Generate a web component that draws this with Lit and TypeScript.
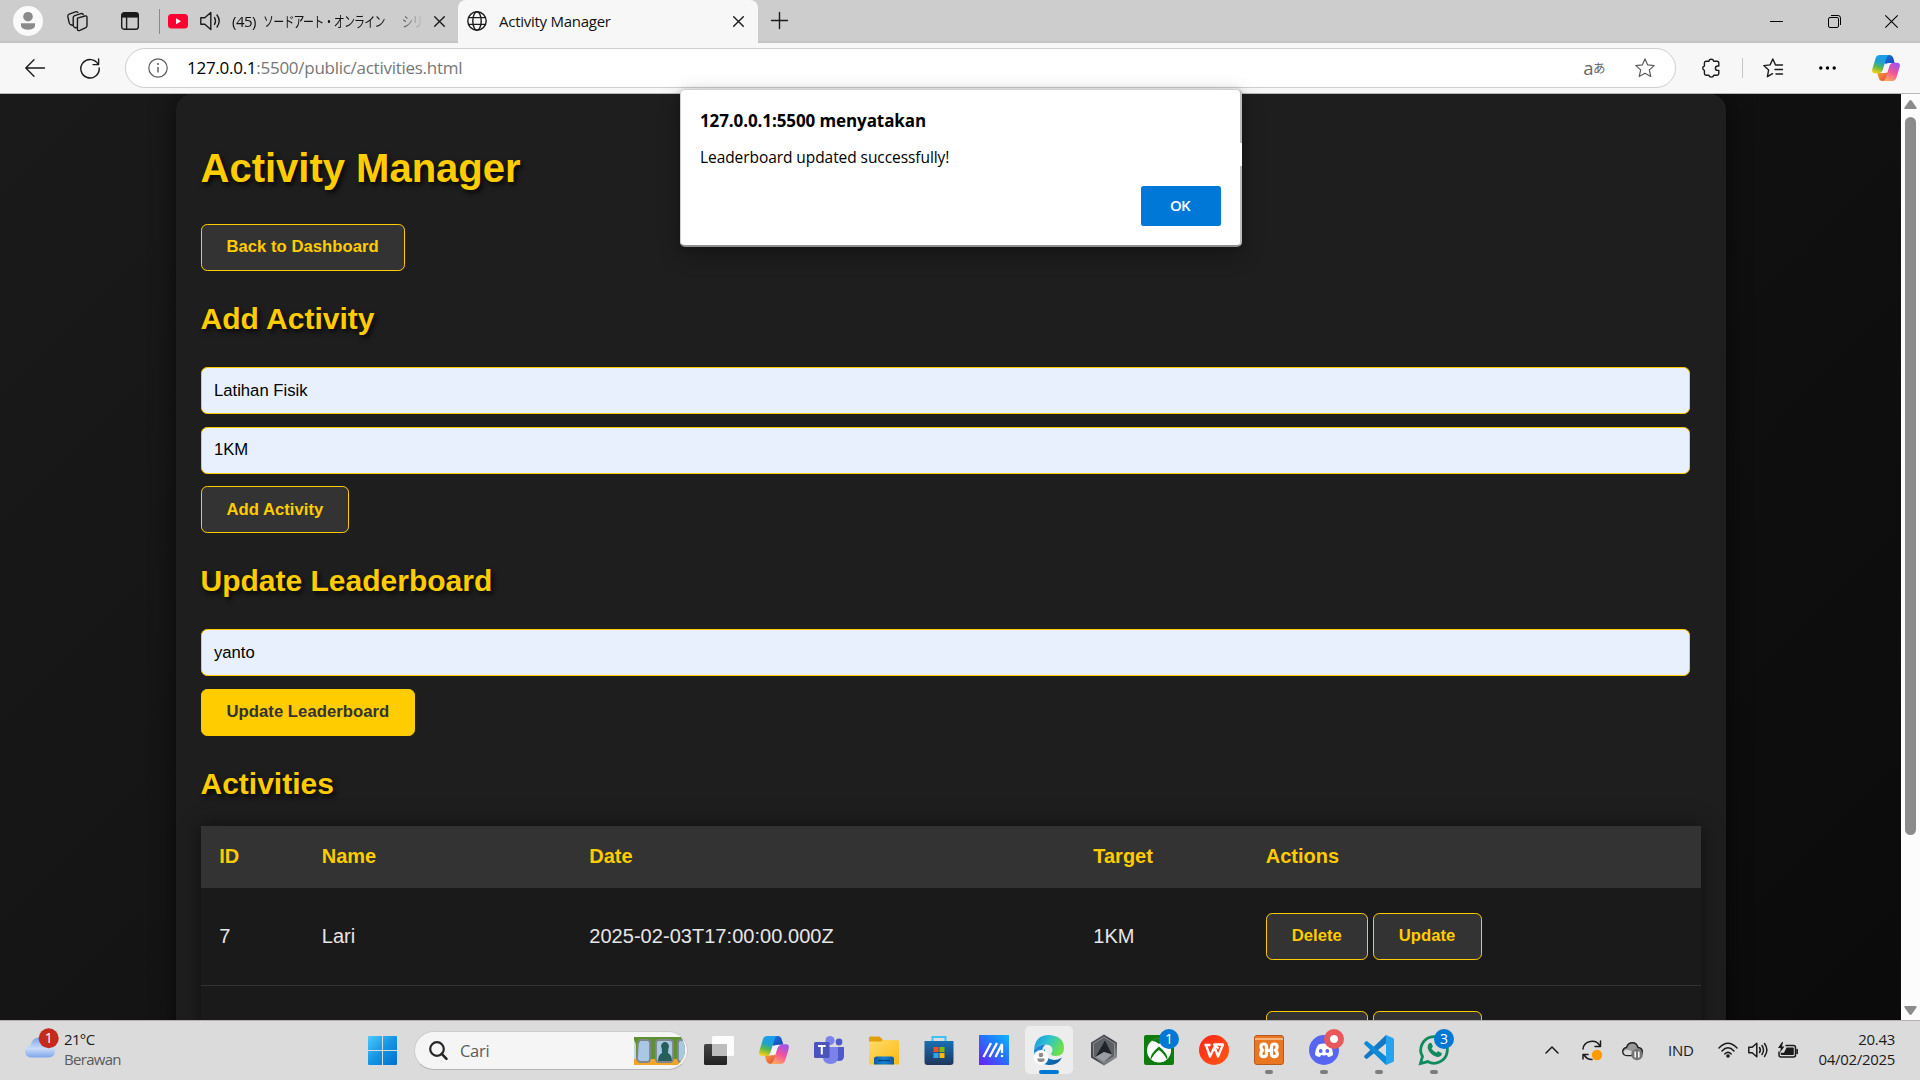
import { LitElement, html, css, svg } from "lit";
import { customElement } from "lit/decorators.js";

const UI_FONT = css`"Open Sans", "Noto Sans CJK JP", sans-serif`;

const copilotIcon = () => html`
  <svg class="copilot" viewBox="0 0 84 78">
    <defs>
      <linearGradient id="cpA" x1="0.6" y1="0" x2="0.3" y2="1">
        <stop offset="0" stop-color="#1b9df0" />
        <stop offset="0.4" stop-color="#1fa0cf" />
        <stop offset="0.68" stop-color="#5cb84c" />
        <stop offset="1" stop-color="#f3cf12" />
      </linearGradient>
      <linearGradient id="cpB" x1="0.75" y1="0" x2="0.3" y2="1">
        <stop offset="0" stop-color="#a052ee" />
        <stop offset="0.5" stop-color="#f0549c" />
        <stop offset="1" stop-color="#ffa95e" />
      </linearGradient>
      <linearGradient id="cpC" x1="0" y1="0" x2="1" y2="1">
        <stop offset="0" stop-color="#1a78e0" />
        <stop offset="1" stop-color="#1a3fb5" />
      </linearGradient>
      <linearGradient id="cpD" x1="0" y1="0" x2="1" y2="1">
        <stop offset="0" stop-color="#f9a63a" />
        <stop offset="1" stop-color="#e2453a" />
      </linearGradient>
    </defs>
    <path fill="url(#cpC)" d="M42 0H52C59 0 62 4 64 10L68 24H54C48 24 45 26 43 30L36 20Z" />
    <path fill="url(#cpD)" d="M42 78H32C25 78 22 74 20 68L16 54H30C36 54 39 52 41 48L48 58Z" />
    <path fill="url(#cpA)" d="M24 0H54C48 0 45 4 43 10L32 46C30 52 27 55 20 55H9C1 55 -1 50 1 42L11 9C13 3 17 0 24 0Z" />
    <path fill="url(#cpB)" d="M60 78H30C36 78 39 74 41 68L52 32C54 26 57 23 64 23H75C83 23 85 28 83 36L73 69C71 75 67 78 60 78Z" />
    <path fill="#f4f4f4" d="M53 25H62C57 26 54 28 52 33L46 50C44 54 38 54 32 54H24C29 53 31 50 33 45L38 31C41 26 46 25 53 25Z" />
  </svg>
`;

@customElement("browser-chrome")
class BrowserChrome extends LitElement {
  static styles = css`
    :host { display: block; font-family: ${UI_FONT}; color: #111; }
    svg { display: block; flex: none; overflow: visible; }
    .line { fill: none; stroke: #1b1b1b; stroke-width: 1.4; stroke-linecap: round; stroke-linejoin: round; }
    .tabs { display: flex; height: 43px; background: linear-gradient(#cdcdcd 0 40px, #c0c0c0 43px); }
    .left { display: flex; width: 160px; box-sizing: border-box; padding-left: 13px; align-items: center; }
    .left svg { margin-bottom: 1px; }
    .ws { margin-left: 22px; }
    .pane { margin-left: 32px; }
    .sep { width: 1px; height: 25px; background: #8a8a8a; margin-left: auto; }
    .tab { display: flex; align-items: center; box-sizing: border-box; font-size: 15px; line-height: 20px; padding-bottom: 1px; }
    .bg { width: 298px; padding-left: 8px; }
    .yt { margin-right: 12px; }
    .title { margin-left: 12px; width: 192px; white-space: nowrap; }
    .jp { display: flex; margin-left: 11px; -webkit-mask-image: linear-gradient(90deg, #000 84%, transparent 100%); mask-image: linear-gradient(90deg, #000 84%, transparent 100%); }
    .count { width: 31px; letter-spacing: -0.5px; }
    .kana { width: 139px; }
    .kana span { display: inline-block; letter-spacing: -1px; font-size: 14.500px; font-family: "Noto Sans CJK JP", sans-serif; transform: scaleX(0.755); transform-origin: 0 50%; }
    .kana.more { width: 22px; }
    .x { margin-left: auto; margin-right: 13px; }
    .active { width: 300px; background: #f7f7f7; border-radius: 8px 8px 0 0; padding-left: 9px; }
    .active .title { letter-spacing: -0.26px; }
    .active .x { margin-right: 14px; }
    .plus { margin: 12px 0 0 13px; }
    .win { margin-left: auto; display: flex; gap: 44.500px; padding: 15px 22px 0 0; }
    .bar { display: flex; align-items: center; height: 50px; background: #f7f7f7; border-bottom: 1px solid #b9b9b9; box-sizing: content-box; padding-left: 25px; }
    .refresh { margin-left: 35px; }
    .pill { display: flex; align-items: center; box-sizing: border-box; width: 1551px; height: 40px; border: 1px solid #cfcfcf; border-radius: 20px; background: #fff; margin-left: 25px; padding-left: 22px; padding-right: 20px; }
    .url { margin-left: 19px; font-size: 17px; line-height: 24px; letter-spacing: -0.27px; color: #767676; white-space: nowrap; padding-bottom: 1px; }
    .host { color: #000; }
    .aa { margin-left: auto; margin-right: 30px; font-size: 18.500px; line-height: 20px; color: #666; letter-spacing: -0.5px; display: flex; align-items: center; }
    .aa i { font-style: normal; font-size: 12.500px; font-family: "Noto Sans CJK JP", sans-serif; }
    .tools { display: flex; align-items: center; flex: 1; padding-left: 25px; }
    .div { width: 1px; height: 20px; background: #c6c6c6; margin: 0 20px 0 21px; }
    .dots { margin-left: 36px; }
    .copilot { width: 28px; height: 26px; margin-left: auto; margin-right: 20px; }
  `;

  private cross(cls: string) {
    return html`<svg class=${cls} width="11" height="11" viewBox="0 0 11 11"><path class="line" d="M.7.7l9.6 9.6M10.3.7L.7 10.3" /></svg>`;
  }

  render() {
    return html`
      <div class="tabs">
        <div class="left">
          <svg width="30" height="30" viewBox="0 0 30 30">
            <circle cx="15" cy="15" r="15" fill="#fafafa" />
            <circle cx="15" cy="10.7" r="4.8" fill="#8b8b8b" />
            <path d="M8 17.3h14v2c0 3-3 4.400-7 4.400s-7-1.400-7-4.400z" fill="#8b8b8b" />
          </svg>
          <svg class="ws" width="24" height="22" viewBox="0 0 24 22">
            <g class="line">
              <path d="M12.500 8.200l7.300-2.200q2.200-.6 2.200 1.600v8q0 1.600-1.600 2.200l-5.600 2.500q-2.400 1-2.400-1.600z" />
              <path d="M12.200 17.500l-2 .2q-2-.4-2-2.400V7.800q0-1.600 1.600-2.200l6-2q1.600-.4 2.400.8" />
              <path d="M8 15.200l-1.800-.4Q4.600 14.200 4.400 12L3.200 6.400Q3 4.800 4.600 4.200l6.200-2.400q1.600-.5 2.400.6" transform="translate(-.4 0)" />
            </g>
          </svg>
          <svg class="pane" width="18" height="18" viewBox="0 0 18 18">
            <rect class="line" x=".7" y=".7" width="16.600" height="16.600" rx="2.600" />
            <path d="M1 1h16v4.600H1z" fill="#1b1b1b" />
            <path class="line" d="M5.600 5v12" />
          </svg>
          <div class="sep"></div>
        </div>
        <div class="tab bg">
          <svg class="yt" width="20" height="15" viewBox="0 0 20 15">
            <rect width="20" height="14.500" rx="3.500" fill="#ff0033" />
            <path d="M8 4.300v6l5-3z" fill="#fff" />
          </svg>
          <svg width="21" height="20" viewBox="0 0 21 20">
            <g class="line">
              <path d="M.8 6.800v6.400h4l6 5.400V1.400l-6 5.400z" />
              <path d="M14.500 6.500q2 3.500 0 7M17 4q4.400 6 0 12" />
            </g>
          </svg>
          <div class="title jp">
            <div class="count">(45)</div>
            <div class="kana"><span>ソードアート・オンライン</span></div>
            <div class="kana more"><span>シリ</span></div>
          </div>
          ${this.cross("x")}
        </div>
        <div class="tab active">
          <svg width="20" height="20" viewBox="0 0 20 20">
            <g class="line">
              <circle cx="10" cy="10" r="9.200" />
              <ellipse cx="10" cy="10" rx="4.200" ry="9.200" />
              <path d="M1.700 6.600h16.600M1.700 13.400h16.600" />
            </g>
          </svg>
          <div class="title">Activity Manager</div>
          ${this.cross("x")}
        </div>
        <svg class="plus" width="17" height="17" viewBox="0 0 17 17"><path class="line" d="M8.500 .5v16M.5 8.500h16" /></svg>
        <div class="win">
          <svg width="13" height="13" viewBox="0 0 13 13"><path d="M0 6.500h13" stroke="#000" /></svg>
          <svg width="13" height="13" viewBox="0 0 13 13">
            <rect x=".5" y="2.500" width="10" height="10" rx="1.500" fill="none" stroke="#000" />
            <path d="M3 .5h7q2.500 0 2.500 2.500v7" fill="none" stroke="#000" />
          </svg>
          <svg width="13" height="13" viewBox="0 0 13 13"><path d="M.3.3l12.400 12.400M12.700.3L.3 12.700" stroke="#000" stroke-width="1.100" /></svg>
        </div>
      </div>
      <div class="bar">
        <svg width="20" height="18" viewBox="0 0 20 18"><path class="line" d="M9 .8L.8 9l8.200 8.200M1 9h18.500" /></svg>
        <svg class="refresh" width="20" height="20" viewBox="0 0 20 20">
          <path class="line" d="M18.200 6.500A9.200 9.200 0 1 0 19.200 10M18.600 1v5.600h-5.600" />
        </svg>
        <div class="pill">
          <svg width="20" height="20" viewBox="0 0 20 20">
            <circle cx="10" cy="10" r="9.200" fill="none" stroke="#5c5c5c" stroke-width="1.200" />
            <path d="M10 9v5.500" stroke="#5c5c5c" stroke-width="1.400" />
            <circle cx="10" cy="6" r="1" fill="#5c5c5c" />
          </svg>
          <div class="url"><span class="host">127.0.0.1</span>:5500/public/activities.html</div>
          <div class="aa">a<i>あ</i></div>
          <svg width="20" height="20" viewBox="0 0 20 20">
            <path d="M10 .9l2.700 6 6.500.7-4.900 4.300 1.500 6.600L10 15.200l-5.800 3.300 1.500-6.600L.8 7.600l6.500-.7z" fill="none" stroke="#5c5c5c" stroke-width="1.200" stroke-linejoin="round" />
          </svg>
        </div>
        <div class="tools">
          <svg width="20" height="20" viewBox="0 0 20 20">
            <path class="line" d="M4.600 3.200h3.200a2.600 2.600 0 0 1 5 0h3.200q1.800 0 1.800 1.800v3h-1.200a2.200 2.200 0 0 0 0 4.400h1.200v3.200q0 1.600-1.800 1.600h-3.200a2.600 2.600 0 0 1-5 0H5.200q-1.800 0-1.800-1.600v-3.200a2.300 2.300 0 0 1 0-4.400V5q0-1.800 1.600-1.800" />
          </svg>
          <div class="div"></div>
          <svg width="20" height="20" viewBox="0 0 20 20">
            <g class="line">
              <path d="M9.500 15.700l-5.100 3 1.200-6.600L.8 7.600l6.300-.7L9.800 1l2.700 5.900M12.500 7h7M12 11.500h7.500M13 16h6.500" />
            </g>
          </svg>
          <svg class="dots" width="17" height="4" viewBox="0 0 17 4">
            <circle cx="1.800" cy="2" r="1.700" /><circle cx="8.500" cy="2" r="1.700" /><circle cx="15.200" cy="2" r="1.700" />
          </svg>
          ${copilotIcon()}
        </div>
      </div>
    `;
  }
}

interface Activity { id: string; name: string; date: string; target: string; }

@customElement("activity-page")
class ActivityPage extends LitElement {
  static styles = css`
    :host { display: flex; font-family: "Liberation Sans", Arial, sans-serif; height: 926px; overflow: hidden; }
    .body { flex: 1; height: 100%; overflow: hidden; display: flex; justify-content: center; background: linear-gradient(135deg, #1a1a1a, #121212 50%, #0b0b0b); }
    .card { box-sizing: border-box; width: 1550px; height: 1100px; flex: none; padding: 0 25px; background: #1e1e1e; border-radius: 16px 16px 0 0; box-shadow: 0 0 25px rgba(0, 0, 0, 0.6); }
    h1, h2 { margin: 0; color: #ffcc00; text-shadow: 2.500px 2.500px 5px rgba(0, 0, 0, 0.8); font-weight: 700; white-space: nowrap; }
    h1 { font-size: 40px; line-height: 46px; padding-top: 51px; height: 79px; }
    h2 { font-size: 30px; line-height: 34px; padding-top: 31px; height: 65px; }
    h2.last { height: 59px; }
    .btn, .field { box-sizing: border-box; height: 47px; border: 1px solid #ffcc00; border-radius: 6.250px; font-size: 16.667px; line-height: 19px; }
    .btn { display: inline-block; padding: 12px 25px; background: #333; color: #ffcc00; font-weight: 700; letter-spacing: 0.02px; }
    .btn.low { padding-top: 13px; }
    .btn.hot { background: #ffcc00; color: #333; letter-spacing: 0.04px; }
    .btn.upd { padding-right: 26px; }
    .field { width: 1489px; padding: 13px 12.500px; background: #e8f0fe; color: #000; margin-bottom: 13px; }
    .field.second { padding-top: 12px; margin-bottom: 12px; }
    .block { display: flex; flex-direction: column; align-items: flex-start; }
    .table { box-shadow: 0 0 19px rgba(0, 0, 0, 0.5); width: 1500px; font-size: 20px; }
    .row { display: grid; grid-template-columns: 102.500px 267.500px 504px 172.500px 1fr; align-items: center; padding-left: 18.750px; box-sizing: border-box; height: 98px; background: #1a1a1a; border-bottom: 1px solid #333; color: #e6e6e6; line-height: 23px; letter-spacing: 0.04px; }
    .head { height: 62px; background: #333; color: #ffcc00; font-weight: 700; letter-spacing: 0; }
    .acts { display: flex; gap: 5px; }
    .scroll { width: 19px; background: #fcfcfc; display: flex; flex-direction: column; align-items: center; box-sizing: border-box; padding: 6px 0 5px; }
    .thumb { width: 11px; height: 718px; border-radius: 6px; background: #8b8b8b; margin-top: 8px; }
    .down { margin-top: auto; }
    svg { display: block; }
  `;

  private rows: Activity[] = [
    { id: "7", name: "Lari", date: "2025-02-03T17:00:00.000Z", target: "1KM" },
    { id: "", name: "", date: "", target: "" },
  ];

  render() {
    return html`
      <div class="body">
        <div class="card">
          <h1>Activity Manager</h1>
          <div class="block"><div class="btn">Back to Dashboard</div></div>
          <h2>Add Activity</h2>
          <div class="block">
            <div class="field">Latihan Fisik</div>
            <div class="field second">1KM</div>
            <div class="btn low">Add Activity</div>
          </div>
          <h2>Update Leaderboard</h2>
          <div class="block">
            <div class="field">yanto</div>
            <div class="btn hot">Update Leaderboard</div>
          </div>
          <h2 class="last">Activities</h2>
          <div class="table">
            <div class="row head">
              <span>ID</span><span>Name</span><span>Date</span><span>Target</span><span>Actions</span>
            </div>
            ${this.rows.map((r) => html`
              <div class="row">
                <span>${r.id}</span><span>${r.name}</span><span>${r.date}</span><span>${r.target}</span>
                <div class="acts">
                  <div class="btn">${r.id ? "Delete" : html`<wbr />`}</div>
                  <div class="btn upd">${r.id ? "Update" : html`<wbr />`}</div>
                </div>
              </div>
            `)}
          </div>
        </div>
      </div>
      <div class="scroll">
        <svg width="13" height="9" viewBox="0 0 13 9"><path d="M6.500 0q.8 0 1.400 1l4.600 6.500q.6 1.500-1 1.500H1.500Q0 9 .5 7.500L5.100 1q.6-1 1.400-1z" fill="#8b8b8b" /></svg>
        <div class="thumb"></div>
        <svg class="down" width="13" height="9" viewBox="0 0 13 9"><path d="M6.500 9q.8 0 1.400-1l4.600-6.500q.6-1.500-1-1.500H1.500Q0 0 .5 1.500L5.100 8q.6 1 1.400 1z" fill="#8b8b8b" /></svg>
      </div>
    `;
  }

  static {
    // Action buttons keep equal widths whether or not their label is in view.
    this.styles = [this.styles, css`
      .acts .btn { box-sizing: border-box; width: 102px; white-space: nowrap; }
      .acts .btn.upd { width: 109px; }
    `] as any;
  }
}

@customElement("alert-dialog")
class AlertDialog extends LitElement {
  static styles = css`
    :host { display: flex; flex-direction: column; box-sizing: border-box; width: 562px; height: 158px; background: #fff; border-radius: 5px; border: 1px solid #d0d0d0; border-right: 2px solid #bdbdbd; border-bottom: 2px solid #8f8f8f; box-shadow: 0 8px 22px rgba(0, 0, 0, 0.3), 0 0 6px rgba(0, 0, 0, 0.12); font-family: ${UI_FONT}; padding: 19px 19px 0 19px; color: #000; white-space: nowrap; }
    :host::after { content: ""; position: absolute; right: -2px; top: 53px; width: 2px; height: 23px; background: #fff; }
    .title { font-size: 17px; line-height: 24px; font-weight: 700; letter-spacing: -0.1px; }
    .text { font-size: 15.500px; line-height: 22px; margin-top: 13px; letter-spacing: -0.07px; }
    .ok { align-self: flex-end; margin-top: 18px; width: 80px; height: 40px; border-radius: 2.500px; background: #0078d7; color: #fff; font-size: 15px; line-height: 39px; font-weight: 600; text-align: center; letter-spacing: -0.6px; text-indent: -2px; }
  `;
  render() {
    return html`
      <div class="title">127.0.0.1:5500 menyatakan</div>
      <div class="text">Leaderboard updated successfully!</div>
      <div class="ok">OK</div>
    `;
  }
}

interface AppIcon { art: unknown; badge?: string; red?: boolean; dot?: boolean; active?: boolean; }

@customElement("task-bar")
class TaskBar extends LitElement {
  static styles = css`
    :host { display: flex; box-sizing: border-box; height: 60px; border-top: 1px solid #b4b0b0; background: #dbdbdb; font-family: ${UI_FONT}; color: #1b1b1b; }
    svg { display: block; flex: none; overflow: visible; }
    .line { fill: none; stroke: #1b1b1b; stroke-width: 1.500; stroke-linecap: round; stroke-linejoin: round; }
    .weather { width: 355px; box-sizing: border-box; padding: 7px 0 0 24px; display: flex; }
    .temp { font-size: 15px; line-height: 20px; letter-spacing: -0.65px; margin: 1px 0 0 8px; }
    .cond { color: #5a5a5a; letter-spacing: -0.7px; }
    .slot { width: 55px; height: 59px; display: flex; align-items: center; justify-content: center; position: relative; padding-bottom: 1px; box-sizing: border-box; }
    .search { display: flex; align-items: center; box-sizing: border-box; width: 274px; height: 39px; margin: 10px 3px 0 4px; border-radius: 20px; background: #f5f5f5; border: 1px solid #cdcdcd; border-bottom-color: #b4b4b4; padding: 0 2px 0 14px; overflow: hidden; }
    .search span { margin-left: 12px; font-size: 16.500px; letter-spacing: -0.3px; color: #5c5c5c; }
    .search .train { margin-left: auto; }
    .plate { width: 48px; height: 48px; border-radius: 5px; background: #ededed; display: flex; align-items: center; justify-content: center; }
    .badge { position: absolute; left: 28px; top: 8px; width: 20px; height: 20px; border-radius: 50%; background: #0078d4; color: #fff; font-size: 14px; line-height: 20px; text-align: center; }
    .badge.red { background: radial-gradient(circle, #fff 0 3.500px, #e9595c 4.500px); }
    .dot, .run { position: absolute; top: 49px; height: 4px; border-radius: 2px; }
    .dot { left: 23.500px; width: 8px; background: #7d7d7d; }
    .run { left: 17.500px; width: 20px; background: #0078d4; }
    .copilot { width: 30px; height: 28px; }
    .tray { margin-left: auto; display: flex; align-items: center; padding: 0 25px 1px 0; }
    .sync { margin-left: 23px; }
    .cloud { margin-left: 20px; margin-top: 2px; }
    .lang { margin-left: 24px; width: 26px; font-size: 15px; letter-spacing: -0.3px; margin-top: -1px; }
    .wifi { margin-left: 24px; }
    .vol { margin-left: 10px; }
    .bat { margin-left: 10px; }
    .clock { margin-left: 19px; width: 78px; text-align: right; font-size: 15px; line-height: 20px; letter-spacing: -0.3px; margin-top: -2px; white-space: nowrap; }
  `;

  private apps: AppIcon[] = [
    { art: svg`<defs><linearGradient id="tvA" x1="0" y1="0" x2="0" y2="1"><stop offset="0" stop-color="#454545"/><stop offset="1" stop-color="#222"/></linearGradient></defs><rect x="0" y="9" width="23" height="21" rx="1.500" fill="url(#tvA)"/><rect x="8" y="1" width="22" height="20" rx="1.500" fill="#fff" opacity=".92"/><path d="M8 9h15v12H8z" fill="#bdbdbd"/>` },
    { art: null },
    { art: svg`<circle cx="16" cy="5.500" r="4.600" fill="#7b83eb"/><circle cx="25" cy="7" r="3.400" fill="#5059c9"/><path d="M20 12h10v9q0 5-5 5-4 0-5-3z" fill="#5059c9"/><path d="M9 12h15v10q0 7-7.500 7T9 22z" fill="#7b83eb"/><rect y="7" width="15.500" height="16" rx="1.500" fill="#4b53bc"/><path d="M4 11h7.600M7.800 11v8.500" stroke="#fff" stroke-width="2"/>` },
    { art: svg`<defs><linearGradient id="exA" x1="0" y1="0" x2="1" y2="1"><stop offset="0" stop-color="#ffdc6b"/><stop offset="1" stop-color="#fcb913"/></linearGradient><linearGradient id="exB" x1="0" y1="0" x2="1" y2="0"><stop offset="0" stop-color="#0c59a4"/><stop offset=".5" stop-color="#1583d6"/><stop offset="1" stop-color="#0c59a4"/></linearGradient></defs><path d="M0 10V3q0-1.500 1.500-1.500h9L14 5v5z" fill="#e39f0b"/><path d="M0 6.500h12L14 5h14.500Q30 5 30 6.500v22q0 1-1 1H1q-1 0-1-1z" fill="url(#exA)"/><path d="M5 29.500v-5.500q0-2.500 2.500-2.500h15q2.500 0 2.500 2.500v5.500z" fill="url(#exB)"/><path d="M9 25.500h12" stroke="#0a3f78" stroke-width="1.200"/>` },
    { art: svg`<defs><linearGradient id="stA" x1="0" y1="0" x2="0" y2="1"><stop offset="0" stop-color="#1770b5"/><stop offset="1" stop-color="#20355c"/></linearGradient></defs><path d="M8.500 7V2h13v5" fill="none" stroke="#3ec1f3" stroke-width="2"/><path d="M.5 6h29v21q0 3-3 3h-23q-3 0-3-3z" fill="url(#stA)"/><path d="M9.500 12h5v5h-5z" fill="#f25022"/><path d="M15.500 12h5v5h-5z" fill="#7fba00"/><path d="M9.500 18h5v5h-5z" fill="#27a8ee"/><path d="M15.500 18h5v5h-5z" fill="#ffb900"/>` },
    { art: svg`<defs><linearGradient id="asA" x1="0" y1="1" x2="1" y2="0"><stop offset="0" stop-color="#6a1cf5"/><stop offset=".6" stop-color="#1f7bff"/><stop offset="1" stop-color="#12b4ff"/></linearGradient></defs><path d="M0 0h30v30H0z" fill="url(#asA)"/><path d="M4.500 22L12 8M10.500 22L18 8M16.500 22L23 9v9" fill="none" stroke="#fff" stroke-width="2.300"/><circle cx="23" cy="21" r="1.300" fill="#fff"/>` },
    { active: true, art: svg`<defs><linearGradient id="edA" x1="0" y1="0" x2="1" y2=".4"><stop offset="0" stop-color="#1b92dd"/><stop offset=".5" stop-color="#2cc3d0"/><stop offset="1" stop-color="#6de04a"/></linearGradient><linearGradient id="edB" x1="0" y1="0" x2="1" y2="1"><stop offset="0" stop-color="#1595df"/><stop offset="1" stop-color="#0b4f93"/></linearGradient></defs><path d="M0 15Q1 0 15 0q15 1 15 13 0 8-8.500 8-4.500 0-4.500-2.500 1.500-1.500 1.500-4Q18 10 12 9.500 4 9.500 0 15z" fill="url(#edA)"/><path d="M0 15q4-5.500 12-5.500-4 2-4 8 0 8 8 11l-1 1.500Q0 29 0 15z" fill="#1c86d3"/><path d="M11 14q-1 10 9 11 4 0 8-2.500-4 8-13 7.500-7-1-7-9 0-5 3-7z" fill="url(#edB)"/><circle cx="7" cy="22.500" r="7.500" fill="#fafafa"/><circle cx="7" cy="20" r="2.300" fill="#8b8b8b"/><path d="M3.500 23.500h7v1q0 2.500-3.500 2.500t-3.500-2.500z" fill="#8b8b8b"/>` },
    { art: svg`<defs><linearGradient id="arA" x1="0" y1="0" x2="1" y2="1"><stop offset="0" stop-color="#5a5d62"/><stop offset=".5" stop-color="#3c4046"/><stop offset="1" stop-color="#a9adb2"/></linearGradient></defs><path d="M15 -.5l13 8v15L15 30.500 2 22.500v-15z" fill="url(#arA)"/><path d="M15 2l10.500 6.500v13L15 28 4.500 21.500v-13z" fill="#5d6166" stroke="#8d9196" stroke-width="1"/><path d="M16 5.500L23 19.500 15 17l-8.500 5z" fill="#202327"/><path d="M6.500 22l8.500-5 8 2.500L15 27z" fill="#9a9ea4"/>` },
    { badge: "1", art: svg`<rect width="30" height="30" rx="2" fill="#107c10"/><circle cx="15" cy="15.500" r="12" fill="#fff"/><path d="M7.500 6Q11 5.500 15 9q4-3.500 7.500-3-3.500-2.700-7.500-2.700T7.500 6zM15 11.500Q5.500 19 6.500 25.500 10 18.500 15 15q5 3.500 8.500 10.500 1-6.500-8.500-14z" fill="#107c10"/>` },
    { art: svg`<defs><linearGradient id="wpA" x1="0" y1="0" x2="1" y2="1"><stop offset="0" stop-color="#ff2218"/><stop offset="1" stop-color="#ff5c17"/></linearGradient></defs><circle cx="15" cy="15" r="15" fill="url(#wpA)"/><path d="M5.500 10h6M7 10l4 11.500L15.500 12l3.500 9.500L24 9.500h-9l4.500 4" fill="none" stroke="#fff" stroke-width="2.300" stroke-linejoin="round"/>` },
    { dot: true, art: svg`<rect x=".5" y=".5" width="29" height="29" rx="2.500" fill="#ea7622" stroke="#b35a1c"/><path d="M1 3h28v2H1z" fill="#f6b37e"/><g fill="none" stroke="#fff" stroke-width="3.800" stroke-linecap="round" stroke-linejoin="round"><path d="M12.500 15.300h5M12.500 15.300v-3.300q0-3-2.800-3t-2.800 2.800q0 2 1.700 3.500-1.900 1.200-1.900 3.500 0 2.800 3 2.800t2.800-3zM17.500 15.300v-3.300q0-3 2.800-3t2.800 2.800q0 2-1.700 3.500 1.900 1.200 1.900 3.500 0 2.800-3 2.800t-2.800-3z" stroke-width="3.200"/></g>` },
    { dot: true, badge: "", red: true, art: svg`<circle cx="15" cy="15" r="15" fill="#5865f2"/><path d="M9.500 9.500Q15 7.500 20.500 9.500q3.500 5 3.500 10.500-2.500 2-5 2l-1-2q-3 .8-6 0l-1 2q-2.500 0-5-2 0-5.500 3.500-10.500z" fill="#fff"/><circle cx="11.700" cy="16" r="1.900" fill="#5865f2"/><circle cx="18.300" cy="16" r="1.900" fill="#5865f2"/>` },
    { dot: true, art: svg`<path d="M22 0l7 3q1 .6 1 2v20q0 1.400-1 2l-7 3z" fill="#24a3ee"/><path d="M22 0v8.500L3.500 23.500q-1 .8-2 0L.4 22.300q-.8-.9.200-1.900z" fill="#1479c4"/><path d="M22 30v-8.500L3.500 6.500q-1-.8-2 0L.4 7.700q-.8.900.2 1.900z" fill="#0f8ad8"/>` },
    { dot: true, badge: "3", art: svg`<path d="M1.500 28.500l2-7A13.300 13.300 0 1 1 8.700 26.600z" fill="none" stroke="#118a5d" stroke-width="2.800"/><path d="M10.500 8q1-.8 2 .3l1.300 2.800q.2.900-1.300 2.400 1.800 3 5 4.300 1.300-1.700 2.200-1.400l2.800 1.500q.9.900-.3 2.700-1.900 2-4.700 1.200Q10.500 19.500 8.600 13 8 10 10.500 8z" fill="#118a5d"/>` },
  ];

  private appSlot(a: AppIcon) {
    const icon = a.art ? html`<svg width="30" height="30" viewBox="0 0 30 30">${a.art}</svg>` : copilotIcon();
    return html`
      <div class="slot">
        ${a.active ? html`<div class="plate">${icon}</div><i class="run"></i>` : icon}
        ${a.badge !== undefined ? html`<div class="badge ${a.red ? "red" : ""}">${a.badge}</div>` : ""}
        ${a.dot ? html`<i class="dot"></i>` : ""}
      </div>
    `;
  }

  render() {
    return html`
      <div class="weather">
        <svg width="32" height="32" viewBox="0 0 32 32">
          <defs><linearGradient id="clA" x1="0" y1="0" x2="0" y2="1"><stop offset="0" stop-color="#7ba4ea" /><stop offset=".55" stop-color="#c9dcf8" /><stop offset="1" stop-color="#7ea5ec" /></linearGradient></defs>
          <path d="M8 29.500q-6.500 0-7-6 0-5 5.500-6Q8 10 14.500 9.500q6 0 8.500 6.500 8 0 8 6.500 0 7-7 7z" fill="url(#clA)" />
          <circle cx="24.700" cy="10.200" r="10" fill="#c42b1c" />
          <text x="24.700" y="15.200" font-size="14" fill="#fff" text-anchor="middle">1</text>
        </svg>
        <div class="temp">21°C<div class="cond">Berawan</div></div>
      </div>
      <div class="slot">
        <svg width="29" height="29" viewBox="0 0 29 29">
          <defs><linearGradient id="wnA" x1="0" y1="0" x2="1" y2="1"><stop offset="0" stop-color="#4cc9fb" /><stop offset=".5" stop-color="#1494e4" /><stop offset="1" stop-color="#0070cf" /></linearGradient></defs>
          <path d="M1 0h13v14H0V1q0-1 1-1zM15 0h13q1 0 1 1v13H15zM0 15h14v14H1q-1 0-1-1zM15 15h14v13q0 1-1 1H15z" fill="url(#wnA)" />
        </svg>
      </div>
      <div class="search">
        <svg width="19" height="19" viewBox="0 0 19 19">
          <circle cx="8" cy="8" r="6.800" fill="none" stroke="#262626" stroke-width="2.200" />
          <path d="M12.800 12.800l4.700 5" stroke="#262626" stroke-width="2.600" stroke-linecap="round" />
        </svg>
        <span>Cari</span>
        <svg class="train" width="51" height="28" viewBox="0 0 51 28">
          <clipPath id="trC"><path d="M0 0h47q4 6 4 13 0 9-8 15H0z" /></clipPath>
          <g clip-path="url(#trC)">
            <path d="M0 0h51v28H0z" fill="#5e9132" />
            <path d="M0 22h51v6H0z" fill="#f2a625" />
            <g stroke="#80868c" stroke-width="1.800" fill="#a9c8e4">
              <path d="M6 3h7q3 0 3 3v16q0 3-3 3H7q-3 0-4-3L4 6z" />
              <rect x="22" y="3" width="17" height="22" rx="3" />
              <rect x="44" y="3" width="17" height="22" rx="3" />
            </g>
            <path d="M24 24q0-6 4-8 0-5-1-7 1-4 4-4t4 4q-1 3-1 7 4 2 4 8z" fill="#255e5b" />
            <path d="M0 3l2 4v15H0z" fill="#c5d5d8" />
          </g>
        </svg>
      </div>
      ${this.apps.map((a) => this.appSlot(a))}
      <div class="tray">
        <svg width="14" height="8" viewBox="0 0 14 8"><path class="line" d="M1 7l6-6 6 6" /></svg>
        <svg class="sync" width="20" height="20" viewBox="0 0 20 20">
          <path class="line" d="M1 9A9 8.500 0 0 1 18 6M18.500 1v5.500H13M1 19v-4.500h5M2 15q3 4.500 8 4.500" />
          <circle cx="15" cy="15" r="5.200" fill="#ff9a00" />
        </svg>
        <svg class="cloud" width="22" height="20" viewBox="0 0 22 20">
          <path d="M5 14.500q-4-.2-4.200-4 .2-3.500 3.700-4Q6 1.800 10.500 1.800q4 0 5.500 4.700 4 .3 4.300 4 0 3.800-4.300 4z" fill="#999" stroke="#222" stroke-width="1.600" />
          <path d="M5 14q-3.500-.2-3.500-3.500 2-3 6.500-1 3 1 5 4.500z" fill="#d9d9d9" />
          <circle cx="15" cy="13.500" r="5.800" fill="#747474" />
          <path d="M13.200 10.500v6M16.800 10.500v6" stroke="#fff" stroke-width="1.500" />
        </svg>
        <div class="lang">IND</div>
        <svg class="wifi" width="20" height="16" viewBox="0 0 20 16">
          <g class="line"><path d="M1 6q9-9.500 18 0M4 9q6-6.300 12 0M6.800 12q3.200-3.200 6.400 0" /></g>
          <circle cx="10" cy="14" r="1.800" fill="#1b1b1b" />
        </svg>
        <svg class="vol" width="20" height="16" viewBox="0 0 20 16">
          <g class="line" stroke-width="1.300"><path d="M.8 5.300v5.400h3.400l4.600 4V1.300l-4.600 4zM11.500 5.500q1.700 2.500 0 5M14 3.500q3 4.500 0 9M16.500 1.500q4.800 6.500 0 13" /></g>
        </svg>
        <svg class="bat" width="20" height="17" viewBox="0 0 20 17">
          <path class="line" d="M8 3.500h7.500q2 0 2 2v7.500q0 2-2 2H3q-2 0-2-2V10M19.200 7.500v4" />
          <path d="M8.500 5.500H15q.8 0 .8.800v6q0 .8-.8.800H3.500q-.8 0-.8-.8v-1.500H6z" fill="#1b1b1b" />
          <path d="M4 0L0 6h2.800L2 10.500 6.500 4.500H4L5 0z" fill="#1b1b1b" />
        </svg>
        <div class="clock">20.43<br />04/02/2025</div>
      </div>
    `;
  }
}

@customElement("app-root")
class AppRoot extends LitElement {
  static styles = css`
    :host { display: block; position: relative; width: 1920px; height: 1080px; overflow: hidden; background: #141414; }
    .dialog { position: absolute; left: 680px; top: 89px; }
  `;
  render() {
    return html`
      <browser-chrome></browser-chrome>
      <activity-page></activity-page>
      <task-bar></task-bar>
      <alert-dialog class="dialog"></alert-dialog>
    `;
  }
}
